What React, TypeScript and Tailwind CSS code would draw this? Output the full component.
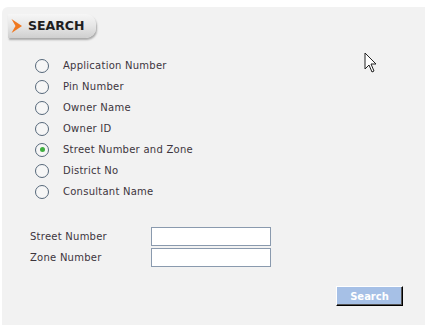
import React from 'react';

const options = [
  'Application Number',
  'Pin Number',
  'Owner Name',
  'Owner ID',
  'Street Number and Zone',
  'District No',
  'Consultant Name',
];

const Radio: React.FC<{ checked?: boolean }> = ({ checked }) => (
  <span className="flex h-[14px] w-[14px] items-center justify-center rounded-full border border-[#56687a] bg-[#f6f6f6]">
    {checked && <span className="h-[5px] w-[5px] rounded-full bg-[#3fae3f]" />}
  </span>
);

export default function App() {
  return (
    <div className="relative h-[331px] w-[433px] bg-white" style={{ fontFamily: '"DejaVu Sans", Verdana, sans-serif' }}>
      <div className="ml-[2px] pt-[7px]">
        <div className="h-[318px] w-[423px] rounded-tl-[6px] bg-[#f2f2f2] pt-[7px]">
          {/* header tab */}
          <div className="ml-[6px] flex h-[24px] w-[88px] items-center rounded-r-[10px] bg-gradient-to-b from-[#f6f6f6] via-[#e6e6e6] to-[#cfcfcf] shadow-[1px_2px_2px_rgba(0,0,0,0.3)]">
            <svg width="12" height="16" viewBox="0 0 12 16" className="ml-[3px]">
              <path d="M0.5 1 L11 8 L0.5 15 L4.5 8 Z" fill="#f07820" />
            </svg>
            <span className="ml-[5px] text-[12.5px] font-bold text-[#1e1e1e]">SEARCH</span>
          </div>

          {/* options */}
          <div className="ml-[33px] mt-[17px] flex flex-col">
            {options.map((o, i) => (
              <label key={o} className="flex h-[21px] items-center">
                <Radio checked={i === 4} />
                <span className="ml-[14px] text-[10px] tracking-[0.25px] text-[#3d353d]">{o}</span>
              </label>
            ))}
          </div>

          {/* fields */}
          <div className="ml-[28px] mt-[25px] flex flex-col gap-[2px]">
            <div className="flex items-center">
              <span className="w-[121px] text-[10px] tracking-[0.25px] text-[#3d353d]">Street Number</span>
              <input className="h-[19px] w-[120px] border border-[#8a9aae] bg-white" />
            </div>
            <div className="flex items-center">
              <span className="w-[121px] text-[10px] tracking-[0.25px] text-[#3d353d]">Zone Number</span>
              <input className="h-[19px] w-[120px] border border-[#8a9aae] bg-white" />
            </div>
          </div>

          <div className="mt-[19px] flex justify-end pr-[22px]">
            <button className="h-[20px] w-[67px] border border-t-white border-l-white border-r-black border-b-black bg-[#a6c0e6] text-[10px] font-bold text-white shadow-[inset_-1px_-1px_0_#555]">
              Search
            </button>
          </div>
        </div>
      </div>

      {/* mouse cursor */}
      <svg width="14" height="22" viewBox="0 0 14 22" className="absolute left-[364px] top-[52px]">
        <path d="M1 1 L1 17 L5 13 L8 20 L10 19 L7 12 L12 12 Z" fill="white" stroke="#222" strokeWidth="1" strokeLinejoin="round" />
      </svg>
    </div>
  );
}
